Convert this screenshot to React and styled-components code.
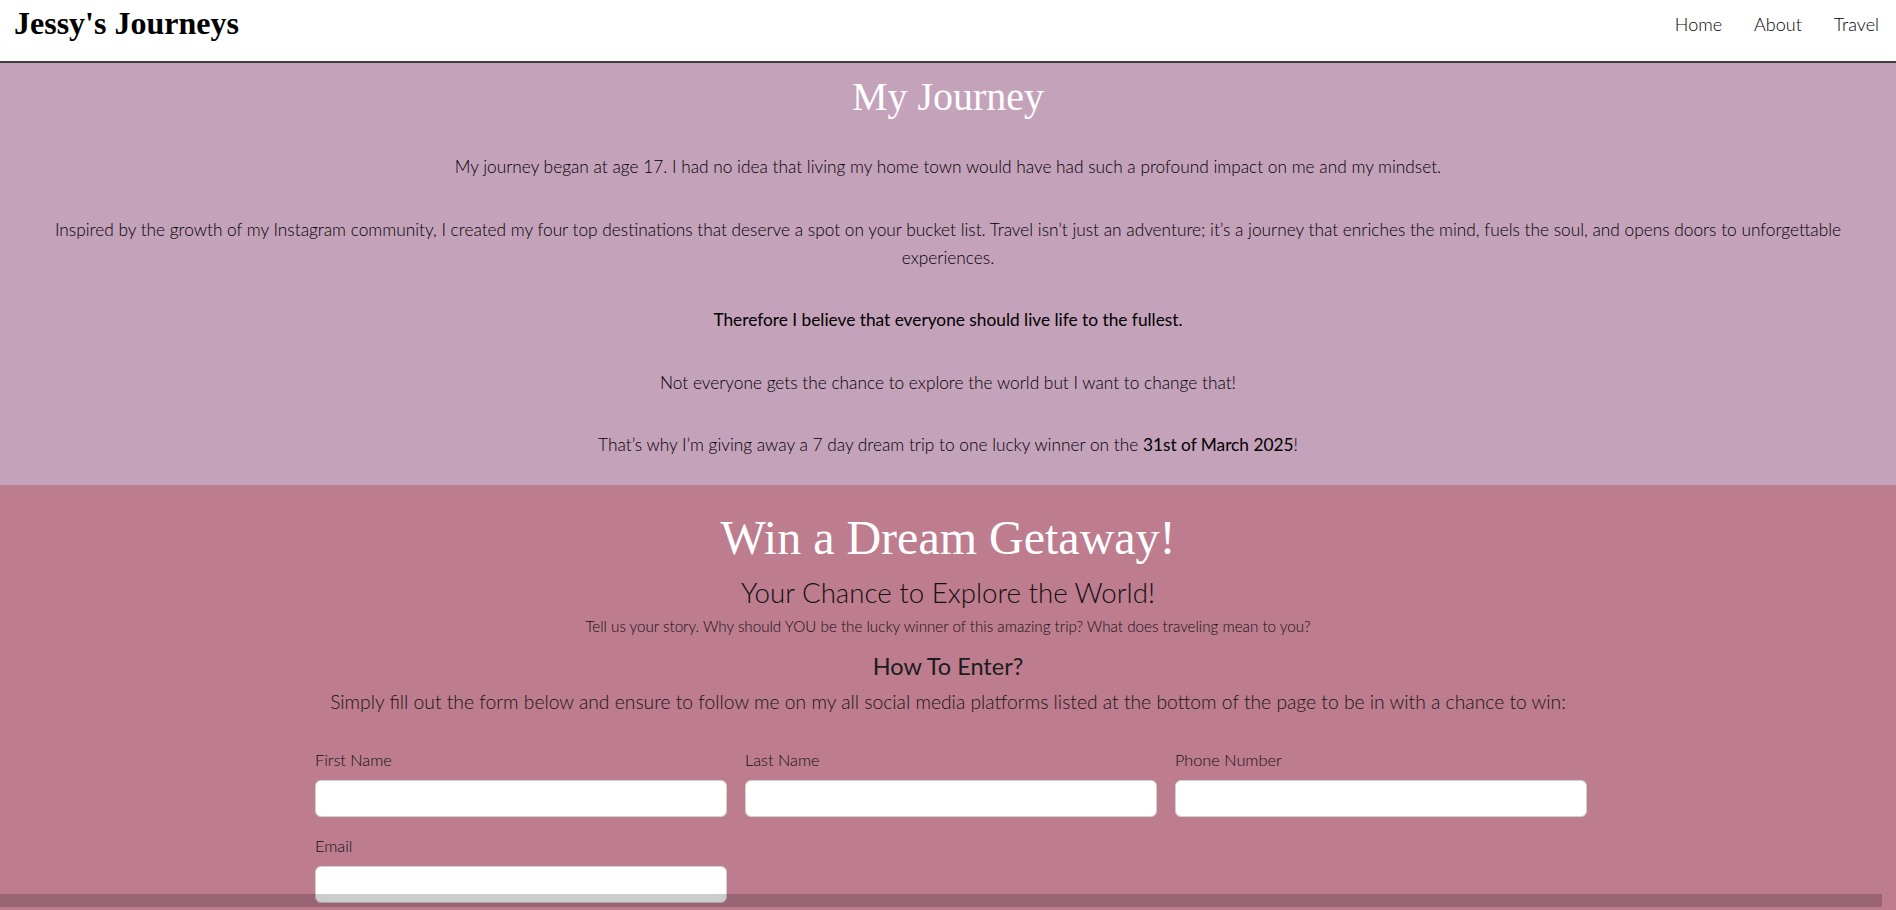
import React from 'react';
import styled, { createGlobalStyle } from 'styled-components';

const GlobalStyle = createGlobalStyle`
  * {
    box-sizing: border-box;
  }

  body {
    margin: 0;
    font-family: 'Lato', 'Open Sans', sans-serif;
    color: #111;
    background: #fff;
  }
`;

const Header = styled.header`
  display: flex;
  align-items: center;
  justify-content: space-between;
  height: 63px;
  padding: 0 17px 14px 14px;
  background: #fff;
  border-bottom: 2px solid #3f3f3f;
`;

const Logo = styled.h1`
  margin: 0;
  font-family: 'Liberation Serif', 'Times New Roman', serif;
  font-size: 32px;
  font-weight: 700;
  color: #000;
`;

const NavList = styled.nav`
  display: flex;
  gap: 32px;
`;

const NavLink = styled.a`
  font-size: 18px;
  font-weight: 300;
  color: #000;
  text-decoration: none;
`;

const JourneySection = styled.section`
  background: #c4a2ba;
  padding: 11px 40px 26px;
  text-align: center;
`;

const SectionTitle = styled.h2`
  margin: 0 0 ${props => props.gap || 0}px;
  font-family: 'Liberation Serif', 'Times New Roman', serif;
  font-size: ${props => props.size}px;
  font-weight: 400;
  line-height: 1.15;
  color: #fff;
`;

const Paragraph = styled.p`
  margin: 0 0 34.5px;
  font-size: 17.3px;
  line-height: 28px;
  font-weight: ${props => (props.strong ? 400 : 300)};
  color: #000;

  &:last-child {
    margin-bottom: 0;
  }

  strong {
    font-weight: 400;
    color: #000;
  }
`;

const GiveawaySection = styled.section`
  background: #be7c8f;
  padding: 25px 40px 40px;
  text-align: center;
`;

const Subtitle = styled.h3`
  margin: 11px 0 0;
  font-size: 27.7px;
  font-weight: 300;
  line-height: 1.2;
  color: #111;
`;

const Prompt = styled.p`
  margin: 8px 0 0;
  font-size: 15.2px;
  font-weight: 300;
  line-height: 19px;
  color: #111;
`;

const EnterTitle = styled.h4`
  margin: 17px 0 0;
  font-size: 23.5px;
  font-weight: 400;
  line-height: 27px;
  color: #1c1c1c;
`;

const Instructions = styled.p`
  margin: 10px 0 0;
  font-size: 19.3px;
  font-weight: 300;
  line-height: 24px;
  color: #151515;
`;

const Form = styled.form`
  display: grid;
  grid-template-columns: repeat(3, 412px);
  column-gap: 18px;
  row-gap: 20px;
  justify-content: center;
  margin-top: 37px;
  padding-left: 6px;
  text-align: left;
`;

const Field = styled.label`
  display: flex;
  flex-direction: column;
  gap: 11px;
`;

const FieldLabel = styled.span`
  font-size: 16.3px;
  font-weight: 300;
  line-height: 18px;
  color: #111;
`;

const TextInput = styled.input`
  height: 37px;
  padding: 0 10px;
  border: 1px solid #cfcfd4;
  border-radius: 6px;
  background: #fff;
  font-family: inherit;
  font-size: 15px;
`;

const ScrollShade = styled.div`
  position: fixed;
  left: 0;
  right: 14px;
  bottom: 3px;
  height: 13px;
  background: rgba(0, 0, 0, 0.2);
  pointer-events: none;
`;

const fields = [
  { label: 'First Name', type: 'text' },
  { label: 'Last Name', type: 'text' },
  { label: 'Phone Number', type: 'tel' },
  { label: 'Email', type: 'email' },
];

const App = () => {
  return (
    <>
      <GlobalStyle />
      <Header>
        <Logo>Jessy's Journeys</Logo>
        <NavList>
          <NavLink href="#">Home</NavLink>
          <NavLink href="#">About</NavLink>
          <NavLink href="#">Travel</NavLink>
        </NavList>
      </Header>

      <JourneySection>
        <SectionTitle size={40} gap={33}>My Journey</SectionTitle>
        <Paragraph>
          My journey began at age 17. I had no idea that living my home town would have had such a profound impact on me and my mindset.
        </Paragraph>
        <Paragraph>
          Inspired by the growth of my Instagram community, I created my four top destinations that deserve a spot on your bucket list. Travel isn’t just an adventure; it’s a journey that enriches the mind, fuels the soul, and opens doors to unforgettable experiences.
        </Paragraph>
        <Paragraph strong>Therefore I believe that everyone should live life to the fullest.</Paragraph>
        <Paragraph>Not everyone gets the chance to explore the world but I want to change that!</Paragraph>
        <Paragraph>
          That’s why I’m giving away a 7 day dream trip to one lucky winner on the <strong>31st of March 2025</strong>!
        </Paragraph>
      </JourneySection>

      <GiveawaySection>
        <SectionTitle size={48}>Win a Dream Getaway!</SectionTitle>
        <Subtitle>Your Chance to Explore the World!</Subtitle>
        <Prompt>
          Tell us your story. Why should YOU be the lucky winner of this amazing trip? What does traveling mean to you?
        </Prompt>
        <EnterTitle>How To Enter?</EnterTitle>
        <Instructions>
          Simply fill out the form below and ensure to follow me on my all social media platforms listed at the bottom of the page to be in with a chance to win:
        </Instructions>
        <Form onSubmit={e => e.preventDefault()}>
          {fields.map(field => (
            <Field key={field.label}>
              <FieldLabel>{field.label}</FieldLabel>
              <TextInput type={field.type} />
            </Field>
          ))}
        </Form>
      </GiveawaySection>
      <ScrollShade />
    </>
  );
};

export default App;
